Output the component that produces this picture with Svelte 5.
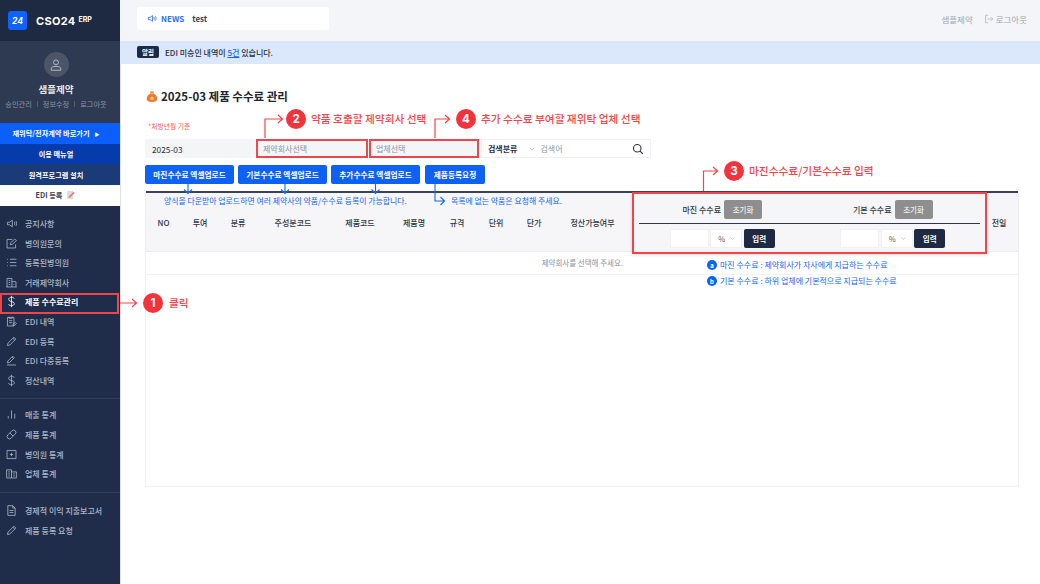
<script>
	const groups = [
		[
			{ label: '공지사항', icon: 'M3 6.5h2.5L9 4v8L5.5 9.5H3z M11.5 6c.7 1.2.7 2.800 0 4 M13.500 5c1 1.800 1 4.200 0 6' },
			{ label: '병의원문의', icon: 'M13 9v4.500H2.500V3H9 M6.500 9.500l.5-2.500 5-4.500 2 2-5 4.500z' },
			{ label: '등록된병의원', icon: 'M2.500 4h1 M2.500 8h1 M2.500 12h1 M6 4h8 M6 8h8 M6 12h8' },
			{ label: '거래제약회사', icon: 'M2.500 13.500V3h6v10.500 M4.500 5.500h2 M4.500 8h2 M4.500 10.500h2 M8.500 7h5v6.500 M1.500 13.500h13 M11 10v1' },
			{ label: '제품 수수료관리', icon: 'M11.500 4.500C11 3.300 9.500 2.800 8 2.800c-2 0-3.500 1-3.500 2.600 0 3.600 7 1.800 7 5.200 0 1.600-1.500 2.600-3.500 2.600-1.700 0-3.200-.6-3.700-2 M8 1v14', active: true },
			{ label: 'EDI 내역', icon: 'M3 3h8v10.500H3z M5 2v2h4V2 M5 7h4 M5 9.500h4 M10 11l2.500-2 1.500 1.500-2.500 2.500H10z' },
			{ label: 'EDI 등록', icon: 'M3 13l.7-3L11 2.700l2.300 2.300L6 12.300z M9.700 4l2.300 2.300' },
			{ label: 'EDI 다중등록', icon: 'M3 11l.6-2.500L9.500 2.600l2 2L5.500 10.500z M8.500 3.700l2 2 M2.500 13.500h11' },
			{ label: '정산내역', icon: 'M11.500 4.500C11 3.300 9.500 2.800 8 2.800c-2 0-3.500 1-3.500 2.600 0 3.600 7 1.800 7 5.200 0 1.600-1.500 2.600-3.500 2.600-1.700 0-3.200-.6-3.700-2 M8 1v14' }
		],
		[
			{ label: '매출 통계', icon: 'M4 10v3 M8 3v10 M12 7v6' },
			{ label: '제품 통계', icon: 'M3.400 8.600l5.200-5.200a2.800 2.800 0 0 1 4 4l-5.200 5.200a2.800 2.800 0 0 1-4-4z M6 6l4 4' },
			{ label: '병의원 통계', icon: 'M2.500 3h11v10h-11z M8 6v4 M6 8h4' },
			{ label: '업체 통계', icon: 'M2 3.500h6v10H2z M8 6h6v7.500H8 M4 6h2 M4 8.500h2 M4 11h2 M10 8.500h2 M10 11h2' }
		],
		[
			{ label: '경제적 이익 지출보고서', icon: 'M3.500 2h6l3 3v9h-9z M9.500 2v3h3 M5.500 8h5 M5.500 10.500h5' },
			{ label: '제품 등록 요청', icon: 'M3 13l.7-3L11 2.700l2.300 2.300L6 12.300z M9.700 4l2.300 2.300' }
		]
	];

	const columns = ['NO', '투여', '분류', '주성분코드', '제품코드', '제품명', '규격', '단위', '단가', '정산가능여부'];
	const uploads = ['마진수수료 엑셀업로드', '기본수수료 엑셀업로드', '추가수수료 엑셀업로드', '제품등록요청'];
	const rates = ['마진 수수료', '기본 수수료'];
</script>

<div class="page">
	<aside class="sidebar">
		<div class="brand">
			<span class="logo">24</span>
			<span class="brand-name">CSO24</span>
			<span class="brand-erp">ERP</span>
		</div>
		<div class="profile">
			<div class="avatar">
				<svg viewBox="0 0 16 16" width="14" height="14" fill="none" stroke="#b4bcc9" stroke-width="1.100">
					<circle cx="8" cy="5" r="2.800" />
					<path d="M2.500 14v-1.200c0-1.800 1.400-3 3-3h5c1.600 0 3 1.200 3 3V14z" />
				</svg>
			</div>
			<div class="profile-name">샘플제약</div>
			<div class="profile-links">
				<span>승인관리</span><i></i><span>정보수정</span><i></i><span>로그아웃</span>
			</div>
		</div>
		<a class="quick quick-a" href="#top">재위탁/전자계약 바로가기 <small>▶</small></a>
		<a class="quick quick-b" href="#top">이용 매뉴얼</a>
		<a class="quick quick-c" href="#top">원격프로그램 설치</a>
		<a class="quick quick-d" href="#top">
			EDI 등록
			<svg viewBox="0 0 12 12" width="10" height="10">
				<path d="M1.500 1h7v10h-7z" fill="#d9dce3" />
				<path d="M3 9.500l.6-2L9 2l1.500 1.500L5 9z" fill="#ee7b5f" />
			</svg>
		</a>
		<nav class="menu">
			{#each groups as group}
				<ul>
					{#each group as item}
						<li class:active={item.active}>
							<svg viewBox="0 0 16 16" width="13" height="13" fill="none" stroke="currentColor" stroke-width="1">
								<path d={item.icon} />
							</svg>
							<span>{item.label}</span>
						</li>
					{/each}
				</ul>
			{/each}
		</nav>
	</aside>

	<main class="main">
		<header class="topbar">
			<div class="news">
				<svg viewBox="0 0 16 16" width="11" height="11" fill="none" stroke="#2f6df6" stroke-width="1.200">
					<path d="M2 6.300h2.500L8 3.800v8.400L4.500 9.700H2z M10.200 6c.6 1.200.6 2.800 0 4 M12.300 4.800c1 2 1 4.400 0 6.400" />
				</svg>
				<b>NEWS</b>
				<span>test</span>
			</div>
			<div class="account">
				<span>샘플제약</span>
				<span class="logout">
					<svg viewBox="0 0 16 16" width="10" height="10" fill="none" stroke="#a0a5ae" stroke-width="1">
						<path d="M7 2H2.500v12H7 M5.500 8H14 M11 5l3 3-3 3" />
					</svg>
					로그아웃
				</span>
			</div>
		</header>
		<div class="alert">
			<span class="alert-tag">알림</span>
			<span>EDI 미승인 내역이 <a href="#top">5건</a> 있습니다.</span>
		</div>

		<section class="content">
			<h1>
				<svg viewBox="0 0 14 14" width="14" height="14">
					<path d="M5 2.500h4L8.300 4.500c2.700 1 4 3.200 4 5.300 0 2.200-2 3.200-5.300 3.200s-5.300-1-5.300-3.200c0-2.100 1.300-4.300 4-5.300z" fill="#e8793a" />
					<path d="M5.200 4.400h3.600" stroke="#f3c04b" stroke-width="1.200" />
					<circle cx="7" cy="9.300" r="1.800" fill="#f6c957" />
				</svg>
				2025-03 제품 수수료 관리
			</h1>
			<p class="basis">*처방년월 기준</p>

			<div class="filters">
				<div class="field month">2025-03</div>
				<div class="field company marked">제약회사선택</div>
				<div class="field vendor marked">업체선택</div>
				<div class="search">
					<b>검색분류</b>
					<svg viewBox="0 0 8 8" width="6" height="6" fill="none" stroke="#a9adb5"><path d="M1 2.500l3 3 3-3" /></svg>
					<span>검색어</span>
					<svg class="glass" viewBox="0 0 16 16" width="12" height="12" fill="none" stroke="#2b3342" stroke-width="1.500">
						<circle cx="7" cy="7" r="5" /><path d="M10.800 10.800L14.500 14.500" />
					</svg>
				</div>
			</div>

			<div class="uploads">
				{#each uploads as label}
					<button type="button">{label}</button>
				{/each}
			</div>

			<div class="table">
				<div class="thead">
					{#each columns as col}
						<div class="th">{col}</div>
					{/each}
					<div class="rates">
						{#each rates as rate}
							<div class="rate-head">
								<b>{rate}</b>
								<button type="button" class="reset">초기화</button>
							</div>
						{/each}
						<div class="rates-line"></div>
						{#each rates as rate}
							<div class="rate-input" aria-label={rate}>
								<span class="num"></span>
								<span class="unit">%
									<svg viewBox="0 0 8 8" width="5" height="5" fill="none" stroke="#a9adb5"><path d="M1 2.500l3 3 3-3" /></svg>
								</span>
								<button type="button" class="enter">입력</button>
							</div>
						{/each}
					</div>
					<div class="th last">전일</div>
				</div>
				<div class="empty-row">제약회사를 선택해 주세요.</div>
				<div class="tbody"></div>
			</div>
		</section>
	</main>

	<!-- 안내 주석 레이어 -->
	<svg class="guides" viewBox="0 0 1040 584" width="1040" height="584" fill="none">
		<g stroke="#f0454c" stroke-width="1.200">
			<path d="M120 303H136 M132 299l4.500 4-4.500 4" />
			<path d="M265 138V119H282 M278 115l4.500 4-4.500 4" />
			<path d="M435 138V119H449 M445 115l4.500 4-4.500 4" />
			<path d="M703.500 191V171H717 M713 167l4.500 4-4.500 4" />
		</g>
		<g stroke="#1565f0" stroke-width="1.100">
			<path d="M188 184V193 M184 189.500l4 4 4-4" />
			<path d="M285 184V193 M281 189.500l4 4 4-4" />
			<path d="M375.500 184V193 M371.500 189.500l4 4 4-4" />
			<path d="M435 184V201H444 M440.500 197l4 4-4 4" />
		</g>
	</svg>

	<span class="badge badge-1">1</span>
	<span class="note note-1">클릭</span>
	<span class="badge badge-2">2</span>
	<span class="note note-2">약품 호출할 제약회사 선택</span>
	<span class="badge badge-3">3</span>
	<span class="note note-3">마진수수료/기본수수료 입력</span>
	<span class="badge badge-4">4</span>
	<span class="note note-4">추가 수수료 부여할 재위탁 업체 선택</span>

	<span class="hint hint-form">양식을 다운받아 업로드하면 여러 제약사의 약품/수수료 등록이 가능합니다.</span>
	<span class="hint hint-req">목록에 없는 약품은 요청해 주세요.</span>
	<span class="legend legend-a"><i>a</i>마진 수수료 : 제약회사가 자사에게 지급하는 수수료</span>
	<span class="legend legend-b"><i>b</i>기본 수수료 : 하위 업체에 기본적으로 지급되는 수수료</span>

	<div class="active-mark"></div>
</div>

<style>
	:global(body) {
		margin: 0;
		background: #fff;
	}

	.page {
		position: relative;
		display: flex;
		width: 1040px;
		height: 584px;
		overflow: hidden;
		font-family: 'Noto Sans CJK KR', 'Inter', sans-serif;
		color: #2a3040;
	}

	.sidebar {
		display: flex;
		flex-direction: column;
		flex: 0 0 120px;
		background: #1f2d4b;
		color: #aeb6c4;
		box-shadow: 1px 0 1px rgba(0, 0, 0, 0.12);
	}

	.brand {
		display: flex;
		align-items: center;
		height: 41px;
		padding-left: 8px;
		box-sizing: border-box;
		background: #1e2a42;
		color: #fff;
	}

	.logo {
		display: flex;
		align-items: center;
		justify-content: center;
		width: 19px;
		height: 19px;
		border-radius: 3px;
		background: #0f62fe;
		font: italic 700 8.500px 'Inter', sans-serif;
	}

	.brand-name {
		margin-left: 9px;
		font: 700 11px 'Inter', sans-serif;
		letter-spacing: 0.3px;
	}

	.brand-erp {
		margin: -3px 0 0 3px;
		font: 700 7px 'Inter', sans-serif;
	}

	.profile {
		display: flex;
		flex-direction: column;
		align-items: center;
		height: 82px;
		box-sizing: border-box;
		padding: 11px 8px 0 0;
		background: #2d3a52;
	}

	.avatar {
		display: flex;
		align-items: center;
		justify-content: center;
		width: 25px;
		height: 25px;
		border-radius: 50%;
		background: #4b5567;
	}

	.profile-name {
		margin-top: 5px;
		font-size: 9.500px;
		line-height: 14px;
		font-weight: 700;
		color: #e4e7ec;
	}

	.profile-links {
		display: flex;
		align-items: center;
		gap: 5px;
		margin-top: 3px;
		font-size: 7.200px;
		line-height: 10px;
		color: #8b95a5;
	}

	.profile-links i {
		width: 1px;
		height: 6px;
		background: #56617a;
	}

	.quick {
		display: flex;
		align-items: center;
		justify-content: center;
		gap: 3px;
		height: 20.700px;
		padding-right: 8px;
		font-size: 7.200px;
		font-weight: 700;
		color: #fff;
		text-decoration: none;
	}

	.quick small {
		font-size: 5px;
		margin-left: 2px;
	}

	.quick-a {
		background: #0d5ffb;
	}

	.quick-b {
		background: #063bab;
	}

	.quick-c {
		background: #1a3a78;
	}

	.quick-d {
		gap: 4px;
		background: #fff;
		color: #3b4252;
	}

	.menu ul {
		margin: 0;
		padding: 6px 0 9px;
		list-style: none;
		border-bottom: 1px solid #2e3c59;
	}

	.menu ul:first-child {
		padding: 8px 0 8px;
	}

	.menu ul:last-child {
		padding-top: 7.500px;
		border-bottom: 0;
	}

	.menu li {
		display: flex;
		align-items: center;
		gap: 7px;
		height: 19.600px;
		padding-left: 5px;
		font-size: 8px;
		font-weight: 500;
	}

	.menu li.active {
		color: #fff;
		font-weight: 700;
	}

	.main {
		flex: 1;
		min-width: 0;
	}

	.topbar {
		display: flex;
		align-items: center;
		justify-content: space-between;
		height: 41px;
		padding: 0 13px 4px 17px;
		box-sizing: border-box;
		background: #f4f5f8;
	}

	.news {
		display: flex;
		align-items: center;
		width: 192px;
		height: 23px;
		padding-left: 10px;
		box-sizing: border-box;
		border-radius: 2px;
		background: #fff;
		font-size: 8px;
	}

	.news b {
		margin-left: 3px;
		color: #2f6df6;
	}

	.news span {
		margin-left: 8px;
		font-weight: 700;
		color: #3b4252;
	}

	.account {
		display: flex;
		align-items: center;
		gap: 11px;
		font-size: 8.500px;
		color: #a0a5ae;
	}

	.logout {
		display: flex;
		align-items: center;
		gap: 2px;
	}

	.alert {
		display: flex;
		align-items: center;
		gap: 6px;
		height: 23px;
		padding: 0 0 1px 17px;
		box-sizing: border-box;
		background: #dbe7fb;
		font-size: 8px;
		font-weight: 500;
		color: #2a3040;
	}

	.alert a {
		color: #1565f0;
		text-decoration: underline;
	}

	.alert-tag {
		display: flex;
		align-items: center;
		justify-content: center;
		width: 22px;
		height: 12px;
		border-radius: 2px;
		background: #1e2a42;
		color: #fff;
		font-size: 6.500px;
		font-weight: 700;
	}

	.content {
		padding: 22px 21px 0 25px;
	}

	h1 {
		display: flex;
		align-items: center;
		gap: 2px;
		height: 20px;
		margin: 0;
		font-size: 11.500px;
		font-weight: 700;
		color: #22262e;
	}

	.basis {
		height: 11px;
		margin: 15px 0 0 3px;
		font-size: 6.800px;
		line-height: 11px;
		color: #ee5a60;
	}

	.filters {
		display: flex;
		gap: 1px;
		height: 19px;
		margin-top: 7px;
		font-size: 8px;
	}

	.field {
		display: flex;
		align-items: center;
		box-sizing: border-box;
		padding-left: 7px;
		background: #f4f5f7;
		color: #8e939c;
	}

	.month {
		width: 110px;
		font-size: 8.300px;
		color: #2a3040;
	}

	.company {
		width: 112px;
	}

	.vendor {
		width: 110px;
		margin-right: 1px;
	}

	.marked {
		outline: 2px solid #f0454c;
		outline-offset: -2px;
	}

	.search {
		display: flex;
		align-items: center;
		flex: 0 0 170px;
		box-sizing: border-box;
		padding: 0 6px;
		border: 1px solid #eff0f3;
		background: #fff;
		color: #9298a2;
	}

	.search b {
		color: #2a3040;
		font-weight: 700;
	}

	.search svg {
		margin-left: 12px;
	}

	.search span {
		margin-left: 5px;
	}

	.search .glass {
		margin-left: auto;
	}

	.uploads {
		display: flex;
		gap: 4px;
		height: 19px;
		margin-top: 7px;
	}

	.uploads button {
		width: 89px;
		padding: 0;
		border: 0;
		border-radius: 2px;
		background: #0d62f5;
		color: #fff;
		font: 700 7.700px 'Noto Sans CJK KR', sans-serif;
	}

	.uploads button:last-child {
		width: 60px;
		margin-left: 1px;
	}

	.table {
		height: 296px;
		margin-top: 7px;
		box-sizing: border-box;
		border: 1px solid #eff0f3;
		border-top: 0;
	}

	.thead {
		display: grid;
		grid-template-columns: 35px 38px 38px 72px 62px 46px 40px 38px 38px 79px 355px 1fr;
		align-items: center;
		height: 61px;
		box-sizing: border-box;
		border-top: 2px solid #3a4354;
		border-bottom: 1px solid #ebecef;
		background: #f6f6f8;
	}

	.th {
		padding-bottom: 2px;
		text-align: center;
		font-size: 8px;
		font-weight: 500;
		color: #2f3542;
	}

	.th.last {
		padding-right: 7px;
	}

	.rates {
		position: relative;
		display: grid;
		grid-template-columns: 1fr 1fr;
		grid-template-rows: 25px 1px 1fr;
		align-self: stretch;
		box-sizing: border-box;
		margin: -1px 0 -1px;
		padding: 4px 5px 4px;
		border: 2px solid #f0454c;
		box-shadow: 0 1px 3px rgba(0, 0, 0, 0.15);
	}

	.rate-head,
	.rate-input {
		display: flex;
		align-items: center;
		justify-content: center;
		padding-right: 4px;
	}

	.rate-head {
		gap: 2px;
		padding-bottom: 3px;
		font-size: 8px;
		color: #2f3542;
	}

	.rate-head b {
		font-weight: 500;
	}

	.reset {
		width: 38px;
		height: 19px;
		margin-left: 1px;
		padding: 0;
		border: 0;
		border-radius: 2px;
		background: #8e8e8e;
		color: #eee;
		font: 500 7.500px 'Noto Sans CJK KR', sans-serif;
	}

	.rates-line {
		grid-column: 1 / 3;
		background: #2c3750;
	}

	.rate-input {
		gap: 1.500px;
		padding-top: 5px;
	}

	.num,
	.unit {
		display: flex;
		align-items: center;
		box-sizing: border-box;
		height: 19px;
		border: 1px solid #f0f1f3;
		background: #fff;
	}

	.num {
		width: 39px;
	}

	.unit {
		justify-content: space-between;
		width: 32px;
		padding: 0 6px 0 7px;
		font-size: 7.500px;
		color: #555;
	}

	.enter {
		width: 31px;
		height: 19px;
		padding: 0;
		border: 0;
		border-radius: 2px;
		background: #1e2a42;
		color: #fff;
		font: 700 7.500px 'Noto Sans CJK KR', sans-serif;
	}

	.empty-row {
		display: flex;
		align-items: center;
		justify-content: flex-end;
		height: 23px;
		padding: 0 395px 2px 0;
		box-sizing: border-box;
		border-bottom: 1px solid #f2f3f5;
		font-size: 7.500px;
		color: #8e939c;
	}

	.guides {
		position: absolute;
		top: 0;
		left: 0;
		pointer-events: none;
	}

	.badge {
		position: absolute;
		display: flex;
		align-items: center;
		justify-content: center;
		width: 20px;
		height: 20px;
		border-radius: 50%;
		background: #f2333c;
		color: #fff;
		font: 700 11.500px 'Inter', sans-serif;
	}

	.badge-1 { left: 143px; top: 293px; }
	.badge-2 { left: 286px; top: 109px; }
	.badge-3 { left: 724px; top: 161px; }
	.badge-4 { left: 456px; top: 109px; }

	.note {
		position: absolute;
		font-size: 10.700px;
		line-height: 16px;
		font-weight: 500;
		color: #f0454c;
		white-space: nowrap;
	}

	.note-1 { left: 169px; top: 295px; }
	.note-2 { left: 311px; top: 111px; }
	.note-3 { left: 749px; top: 163px; }
	.note-4 { left: 481px; top: 111px; }

	.hint {
		position: absolute;
		font-size: 7.900px;
		line-height: 12px;
		color: #1565f0;
		white-space: nowrap;
	}

	.hint-form { left: 164px; top: 195px; }
	.hint-req { left: 451px; top: 195px; }

	.legend {
		position: absolute;
		display: flex;
		align-items: center;
		gap: 3px;
		left: 707px;
		font-size: 8px;
		line-height: 12px;
		color: #1565f0;
		white-space: nowrap;
	}

	.legend i {
		display: flex;
		align-items: center;
		justify-content: center;
		width: 10px;
		height: 10px;
		border-radius: 50%;
		background: #0d62f5;
		color: #fff;
		font: 700 6px 'Inter', sans-serif;
	}

	.legend-a { top: 259px; }
	.legend-b { top: 275px; }

	.active-mark {
		position: absolute;
		left: 0;
		top: 293px;
		width: 119px;
		height: 21px;
		box-sizing: border-box;
		border: 2px solid #f0454c;
	}
</style>
